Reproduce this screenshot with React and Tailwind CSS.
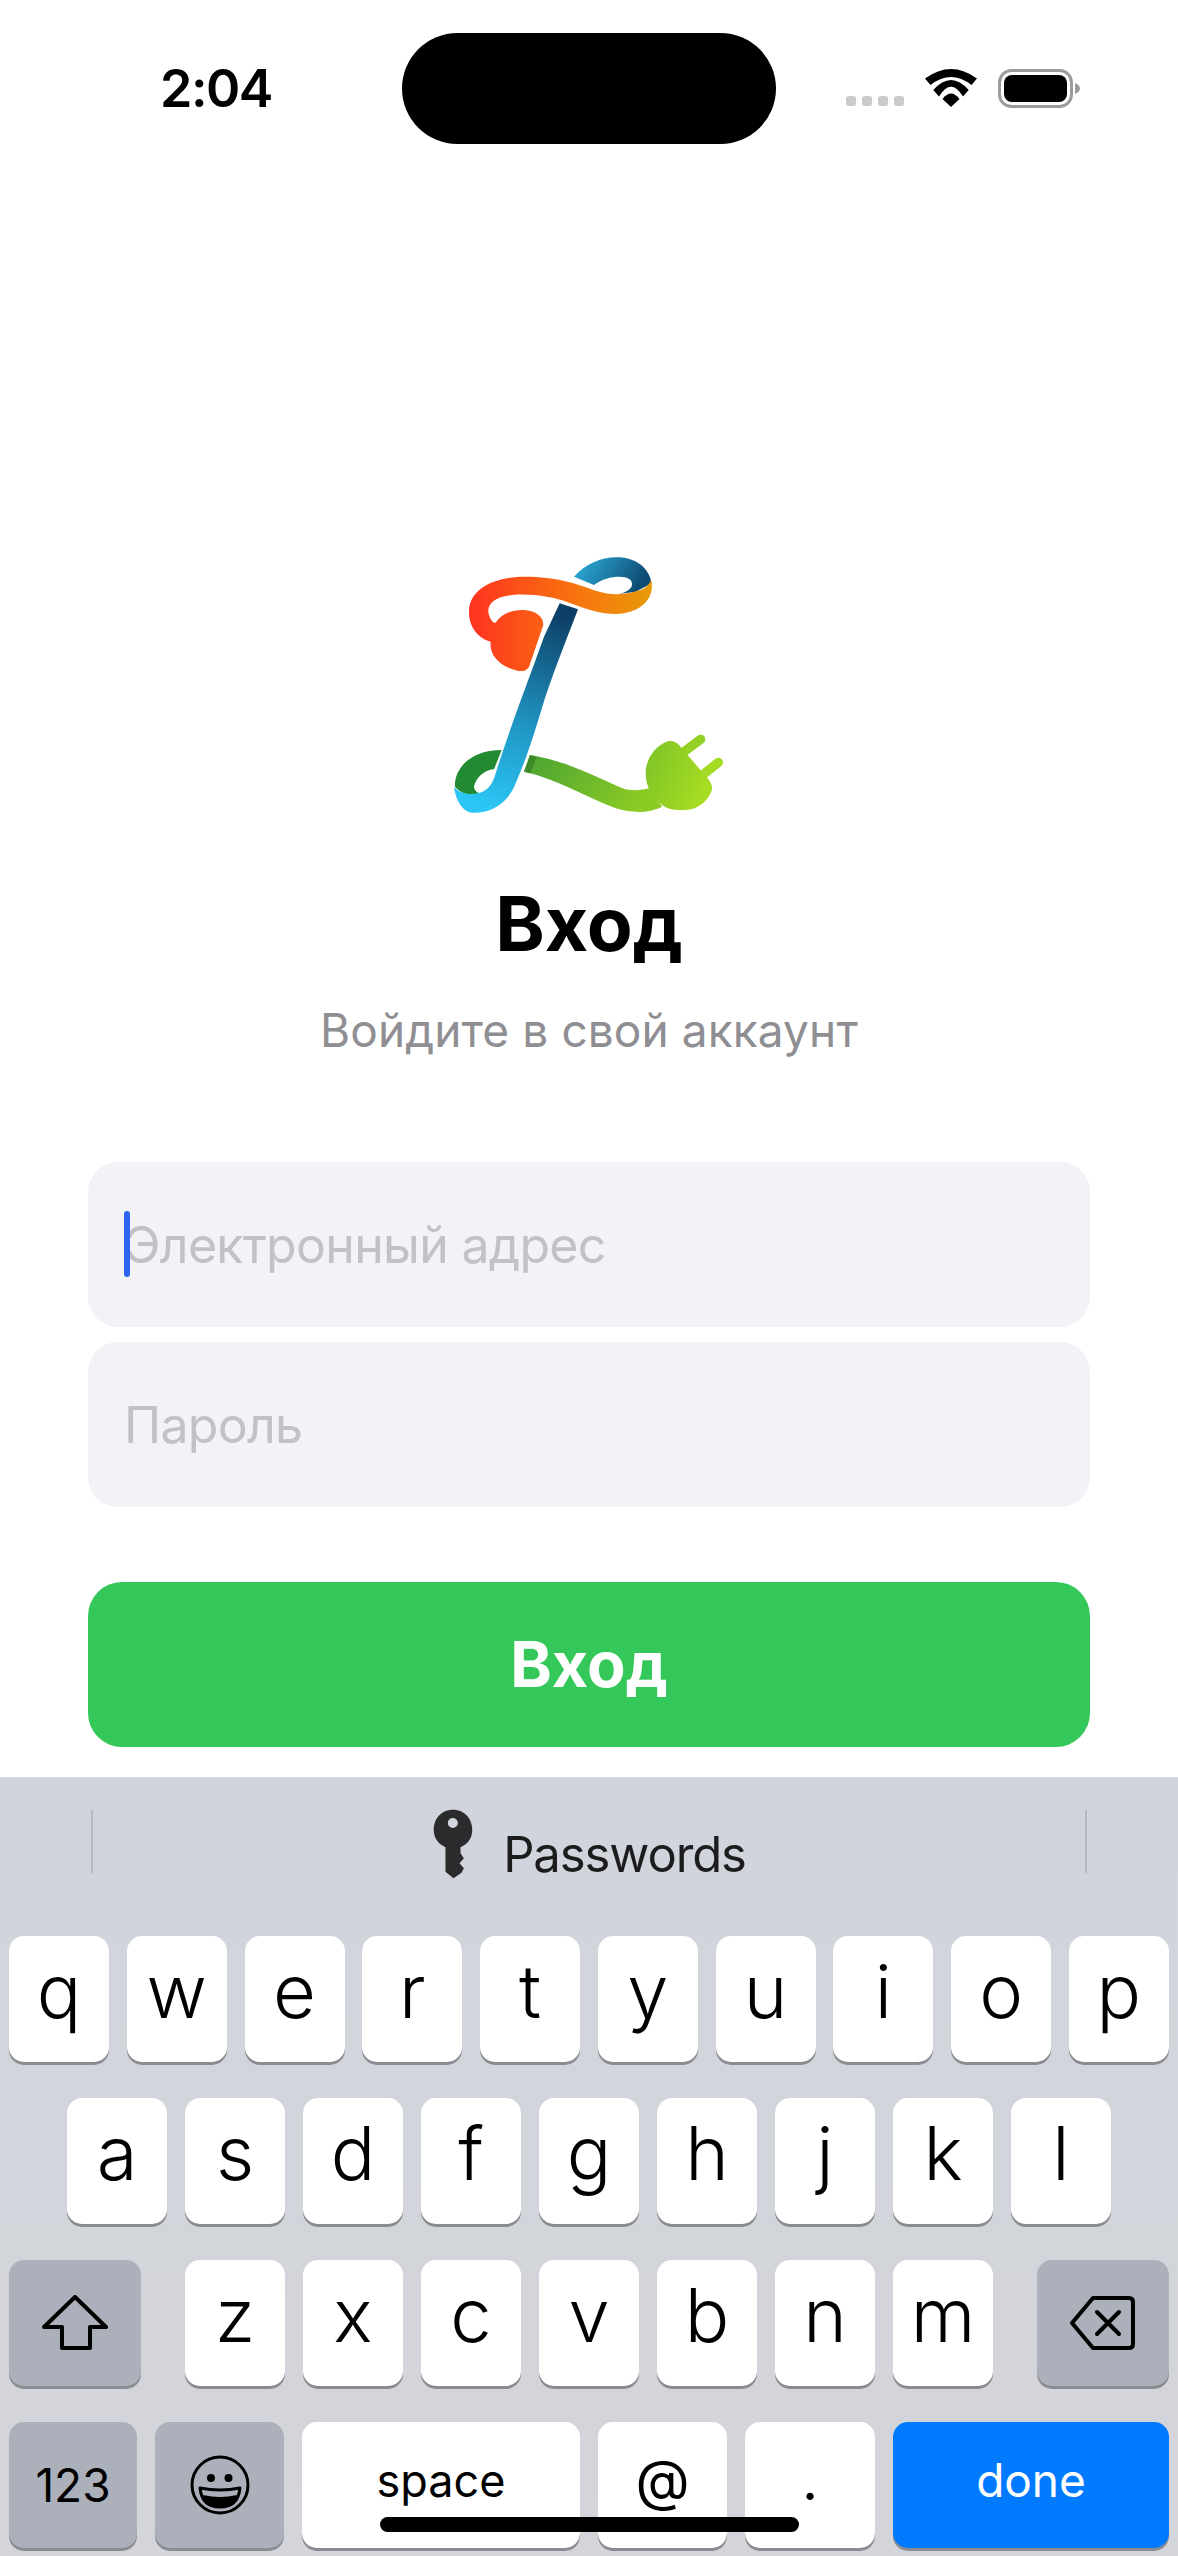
const ROW_1 = ["q", "w", "e", "r", "t", "y", "u", "i", "o", "p"];
const ROW_2 = ["a", "s", "d", "f", "g", "h", "j", "k", "l"];
const ROW_3 = ["z", "x", "c", "v", "b", "n", "m"];

function WifiIcon() {
    return (
        <svg width="52" height="38" viewBox="0 0 52 38" fill="#000">
            <path d="M0 9.5 Q26 -9.5 52 9.5 L46.5 16 Q26 0 5.5 16 Z" />
            <path d="M8.3 21 Q26 1 43.7 21 L38 27.5 Q26 8 14 27.5 Z" />
            <path d="M17.5 30 Q26 19 34.5 30 L26 38 Z" />
        </svg>
    );
}

function BatteryIcon() {
    return (
        <svg width="82" height="39" viewBox="0 0 82 39">
            <rect x="1.5" y="1.5" width="72" height="36" rx="12" fill="none" stroke="#9c9c9c" strokeWidth="3" />
            <rect x="6" y="6" width="63" height="27" rx="8" fill="#000" />
            <path d="M77 14 C80 15 82 17 82 19.5 C82 22 80 24 77 25 Z" fill="#9c9c9c" />
        </svg>
    );
}

function StatusBar() {
    return (
        <div className="mt-[33px] flex h-[111px] items-center pl-[160px]">
            <div className="w-[242px] text-[52px] leading-none font-semibold tracking-[-1.5px] text-black">2:04</div>
            <div className="h-[111px] w-[374px] rounded-[56px] bg-black" />
            <div className="ml-[70px] flex items-end">
                <div className="mb-[2px] flex gap-[6px]">
                    <div className="h-[10px] w-[10px] rounded-[3px] bg-[#cbcbcb]" />
                    <div className="h-[10px] w-[10px] rounded-[3px] bg-[#cbcbcb]" />
                    <div className="h-[10px] w-[10px] rounded-[3px] bg-[#cbcbcb]" />
                    <div className="h-[10px] w-[10px] rounded-[3px] bg-[#cbcbcb]" />
                </div>
                <div className="ml-[21px] mb-[1px]">
                    <WifiIcon />
                </div>
                <div className="ml-[21px]">
                    <BatteryIcon />
                </div>
            </div>
        </div>
    );
}

// Traced from the reference at 3x, so the viewBox is three times the box size
function Logo() {
    return (
        <svg width="320" height="300" viewBox="0 0 960 900" className="block">
            <defs>
                <linearGradient id="loop" x1="0" y1="0" x2="1" y2="0.3">
                    <stop offset="0" stopColor="#2fb4e0" />
                    <stop offset="1" stopColor="#0e4a72" />
                </linearGradient>
                <linearGradient id="band" x1="0" y1="0.5" x2="1" y2="0.5">
                    <stop offset="0" stopColor="#ff3320" />
                    <stop offset="0.55" stopColor="#f8700f" />
                    <stop offset="1" stopColor="#e89a08" />
                </linearGradient>
                <linearGradient id="stem" x1="0.6" y1="0" x2="0.4" y2="1">
                    <stop offset="0" stopColor="#0d3f66" />
                    <stop offset="0.55" stopColor="#1f93c0" />
                    <stop offset="1" stopColor="#2bc6f5" />
                </linearGradient>
                <linearGradient id="wire" x1="0" y1="0" x2="1" y2="0.3">
                    <stop offset="0" stopColor="#48a234" />
                    <stop offset="1" stopColor="#8ccb24" />
                </linearGradient>
                <linearGradient id="plug" x1="0" y1="0" x2="1" y2="0.4">
                    <stop offset="0" stopColor="#7cc228" />
                    <stop offset="1" stopColor="#a6dc22" />
                </linearGradient>
            </defs>
            <path
                d="M435 140 C470 100 520 80 570 82 C625 85 660 115 668 160 L620 185 L570 192 C600 185 618 170 605 150 C590 135 535 135 495 165 Z"
                fill="url(#loop)"
            />
            <path
                d="M120 245 C120 180 190 140 290 140 C380 140 440 160 500 182 C550 198 600 195 640 178 C655 170 662 160 666 150 C680 200 640 250 560 252 C510 252 460 232 420 218 C370 200 310 190 250 195 C195 200 170 225 180 255 C185 272 195 280 200 278 C215 255 245 238 285 240 C320 242 348 262 342 288 L302 405 C297 420 285 426 265 422 C220 412 180 380 185 335 C150 325 120 295 120 245 Z"
                fill="url(#band)"
            />
            <path
                d="M218 660 L195 718 C165 720 140 745 135 770 C135 780 145 790 160 792 C130 805 95 790 78 770 C75 720 120 660 218 660 Z"
                fill="#228b32"
            />
            <path
                d="M392 220 L447 238 C420 310 375 420 340 530 C310 630 290 690 260 760 C235 825 180 850 130 848 C100 845 80 810 75 770 C90 790 120 795 145 790 C175 785 190 765 200 730 C240 600 310 420 345 320 Z"
                fill="url(#stem)"
            />
            <path
                d="M303 675 C400 690 480 730 580 775 C610 785 640 780 660 775 L700 830 C660 850 610 850 560 835 C470 800 380 745 285 725 Z"
                fill="url(#wire)"
            />
            <path d="M303 675 L322 680 L305 730 L285 725 Z" fill="#3d8a2a" />
            <path d="M765 665 L815 628" stroke="#94d026" strokeWidth="28" strokeLinecap="round" />
            <path d="M815 740 L868 697" stroke="#a2da24" strokeWidth="28" strokeLinecap="round" />
            <path
                d="M712 635 C725 630 740 635 750 645 L840 750 C850 765 852 775 845 790 C830 820 800 840 770 840 C740 842 715 838 700 825 C670 805 650 770 650 730 C650 690 675 650 712 635 Z"
                fill="url(#plug)"
            />
        </svg>
    );
}

function Field({ label, children }) {
    return (
        <div className="relative flex h-[165px] items-center rounded-[30px] bg-[#f2f2f7] px-[36px] text-[50px] leading-none tracking-[-0.7px] text-[#c1c1c6]">
            {children}
            {label}
        </div>
    );
}

function LoginForm() {
    return (
        <div className="flex-1 px-[88px]">
            <div className="mt-[386px] flex justify-center">
                <Logo />
            </div>
            <h1 className="mt-[50px] text-center text-[75px] leading-[88px] font-bold text-black">Вход</h1>
            <p className="mt-[34px] text-center text-[46px] leading-[56px] tracking-[0.1px] text-[#8e8e93]">
                Войдите в свой аккаунт
            </p>
            <div className="mt-[104px] flex flex-col gap-[15px]">
                <Field label="Электронный адрес">
                    <div className="absolute top-[49px] left-[36px] h-[66px] w-[6px] rounded-full bg-[#2f64f2]" />
                </Field>
                <Field label="Пароль" />
            </div>
            <button className="mt-[75px] h-[165px] w-full rounded-[34px] bg-[#34c759] text-[63px] font-bold text-white">
                Вход
            </button>
        </div>
    );
}

function Key({ children, className = "" }) {
    return (
        <div
            className={`flex h-[126px] items-center justify-center rounded-[15px] shadow-[0_3px_0_#8b8c91] ${className}`}
        >
            {children}
        </div>
    );
}

function LetterKey({ letter }) {
    return (
        <Key className="w-[100px] bg-white pb-[16px] text-[74px] leading-none font-light text-black">{letter}</Key>
    );
}

function KeyGlyph() {
    return (
        <svg width="42" height="72" viewBox="40 35 125 215" className="mt-[31px]">
            <path
                fillRule="evenodd"
                fill="#2b2b2d"
                d="M102 40 C140 40 160 70 160 100 C160 125 148 142 125 152 L125 170 L135 185 L122 200 L135 215 L128 228 L104 245 L80 225 L80 152 C58 142 45 125 45 100 C45 70 65 40 102 40 Z M102 65 A15 15 0 1 0 102 95 A15 15 0 1 0 102 65 Z"
            />
        </svg>
    );
}

function Keyboard() {
    return (
        <div className="h-[779px] bg-gradient-to-b from-[#d0d4dc] to-[#d4d5da]">
            <div className="flex h-[159px] items-start justify-between px-[91px]">
                <div className="mt-[33px] h-[63px] w-[2px] bg-[#b6b9c0]" />
                <div className="flex gap-[29px]">
                    <KeyGlyph />
                    <span className="mt-[50px] text-[49px] leading-[56px] tracking-[-1.1px] text-[#1c1c1e]">Passwords</span>
                </div>
                <div className="mt-[33px] h-[63px] w-[2px] bg-[#b6b9c0]" />
            </div>
            <div className="flex flex-col gap-[36px]">
                <div className="flex justify-between px-[9px]">
                    {ROW_1.map((k) => (
                        <LetterKey key={k} letter={k} />
                    ))}
                </div>
                <div className="flex justify-between px-[67px]">
                    {ROW_2.map((k) => (
                        <LetterKey key={k} letter={k} />
                    ))}
                </div>
                <div className="flex items-center justify-between px-[9px]">
                    <Key className="w-[132px] bg-[#abb0ba]">
                        <svg width="66" height="56" viewBox="0 0 66 56" fill="none" stroke="#000" strokeWidth="4" strokeLinejoin="round">
                            <path d="M33 2 L64 32 L48 32 L48 53 L20 53 L20 32 L2 32 Z" />
                        </svg>
                    </Key>
                    <div className="flex gap-[18px]">
                        {ROW_3.map((k) => (
                            <LetterKey key={k} letter={k} />
                        ))}
                    </div>
                    <Key className="w-[132px] bg-[#abb0ba]">
                        <svg width="68" height="56" viewBox="0 0 68 56" fill="none" stroke="#000" strokeWidth="4" strokeLinejoin="round" strokeLinecap="round">
                            <path d="M3 28 L24 3 L60 3 Q64 3 64 7 L64 49 Q64 53 60 53 L24 53 Z" />
                            <path d="M28 17 L50 39 M50 17 L28 39" />
                        </svg>
                    </Key>
                </div>
                <div className="flex gap-[18px] px-[9px]">
                    <Key className="w-[128px] bg-[#abb0ba] text-[46px] leading-none text-black">123</Key>
                    <Key className="w-[129px] bg-[#abb0ba]">
                        <svg width="64" height="64" viewBox="0 0 64 64" fill="none">
                            <circle cx="32" cy="32" r="28" stroke="#000" strokeWidth="3" />
                            <circle cx="23" cy="25" r="4" fill="#000" />
                            <circle cx="40.5" cy="25" r="4" fill="#000" />
                            <path d="M12 35 Q32 39 52 35 Q50 54 32 54 Q14 54 12 35 Z" stroke="#000" strokeWidth="3" strokeLinejoin="round" />
                            <path d="M15 42 Q32 46 49 42 Q45 54 32 54 Q19 54 15 42 Z" fill="#000" />
                        </svg>
                    </Key>
                    <Key className="w-[278px] bg-white pb-[10px] text-[45px] leading-none text-black">space</Key>
                    <Key className="w-[129px] bg-white pb-[10px] text-[56px] leading-none text-black">@</Key>
                    <Key className="w-[130px] bg-white pb-[10px] text-[56px] leading-none text-black">.</Key>
                    <Key className="w-[276px] bg-[#007aff] pb-[10px] text-[46px] leading-none text-white">done</Key>
                </div>
            </div>
        </div>
    );
}

export default function App() {
    return (
        <div className="relative flex h-[2556px] w-[1178px] flex-col overflow-hidden bg-white font-['Inter','Noto_Sans',sans-serif]">
            <StatusBar />
            <LoginForm />
            <Keyboard />
            {/* home indicator sits over the keys */}
            <div className="absolute top-[2517px] left-[380px] h-[15px] w-[419px] rounded-full bg-black" />
        </div>
    );
}
